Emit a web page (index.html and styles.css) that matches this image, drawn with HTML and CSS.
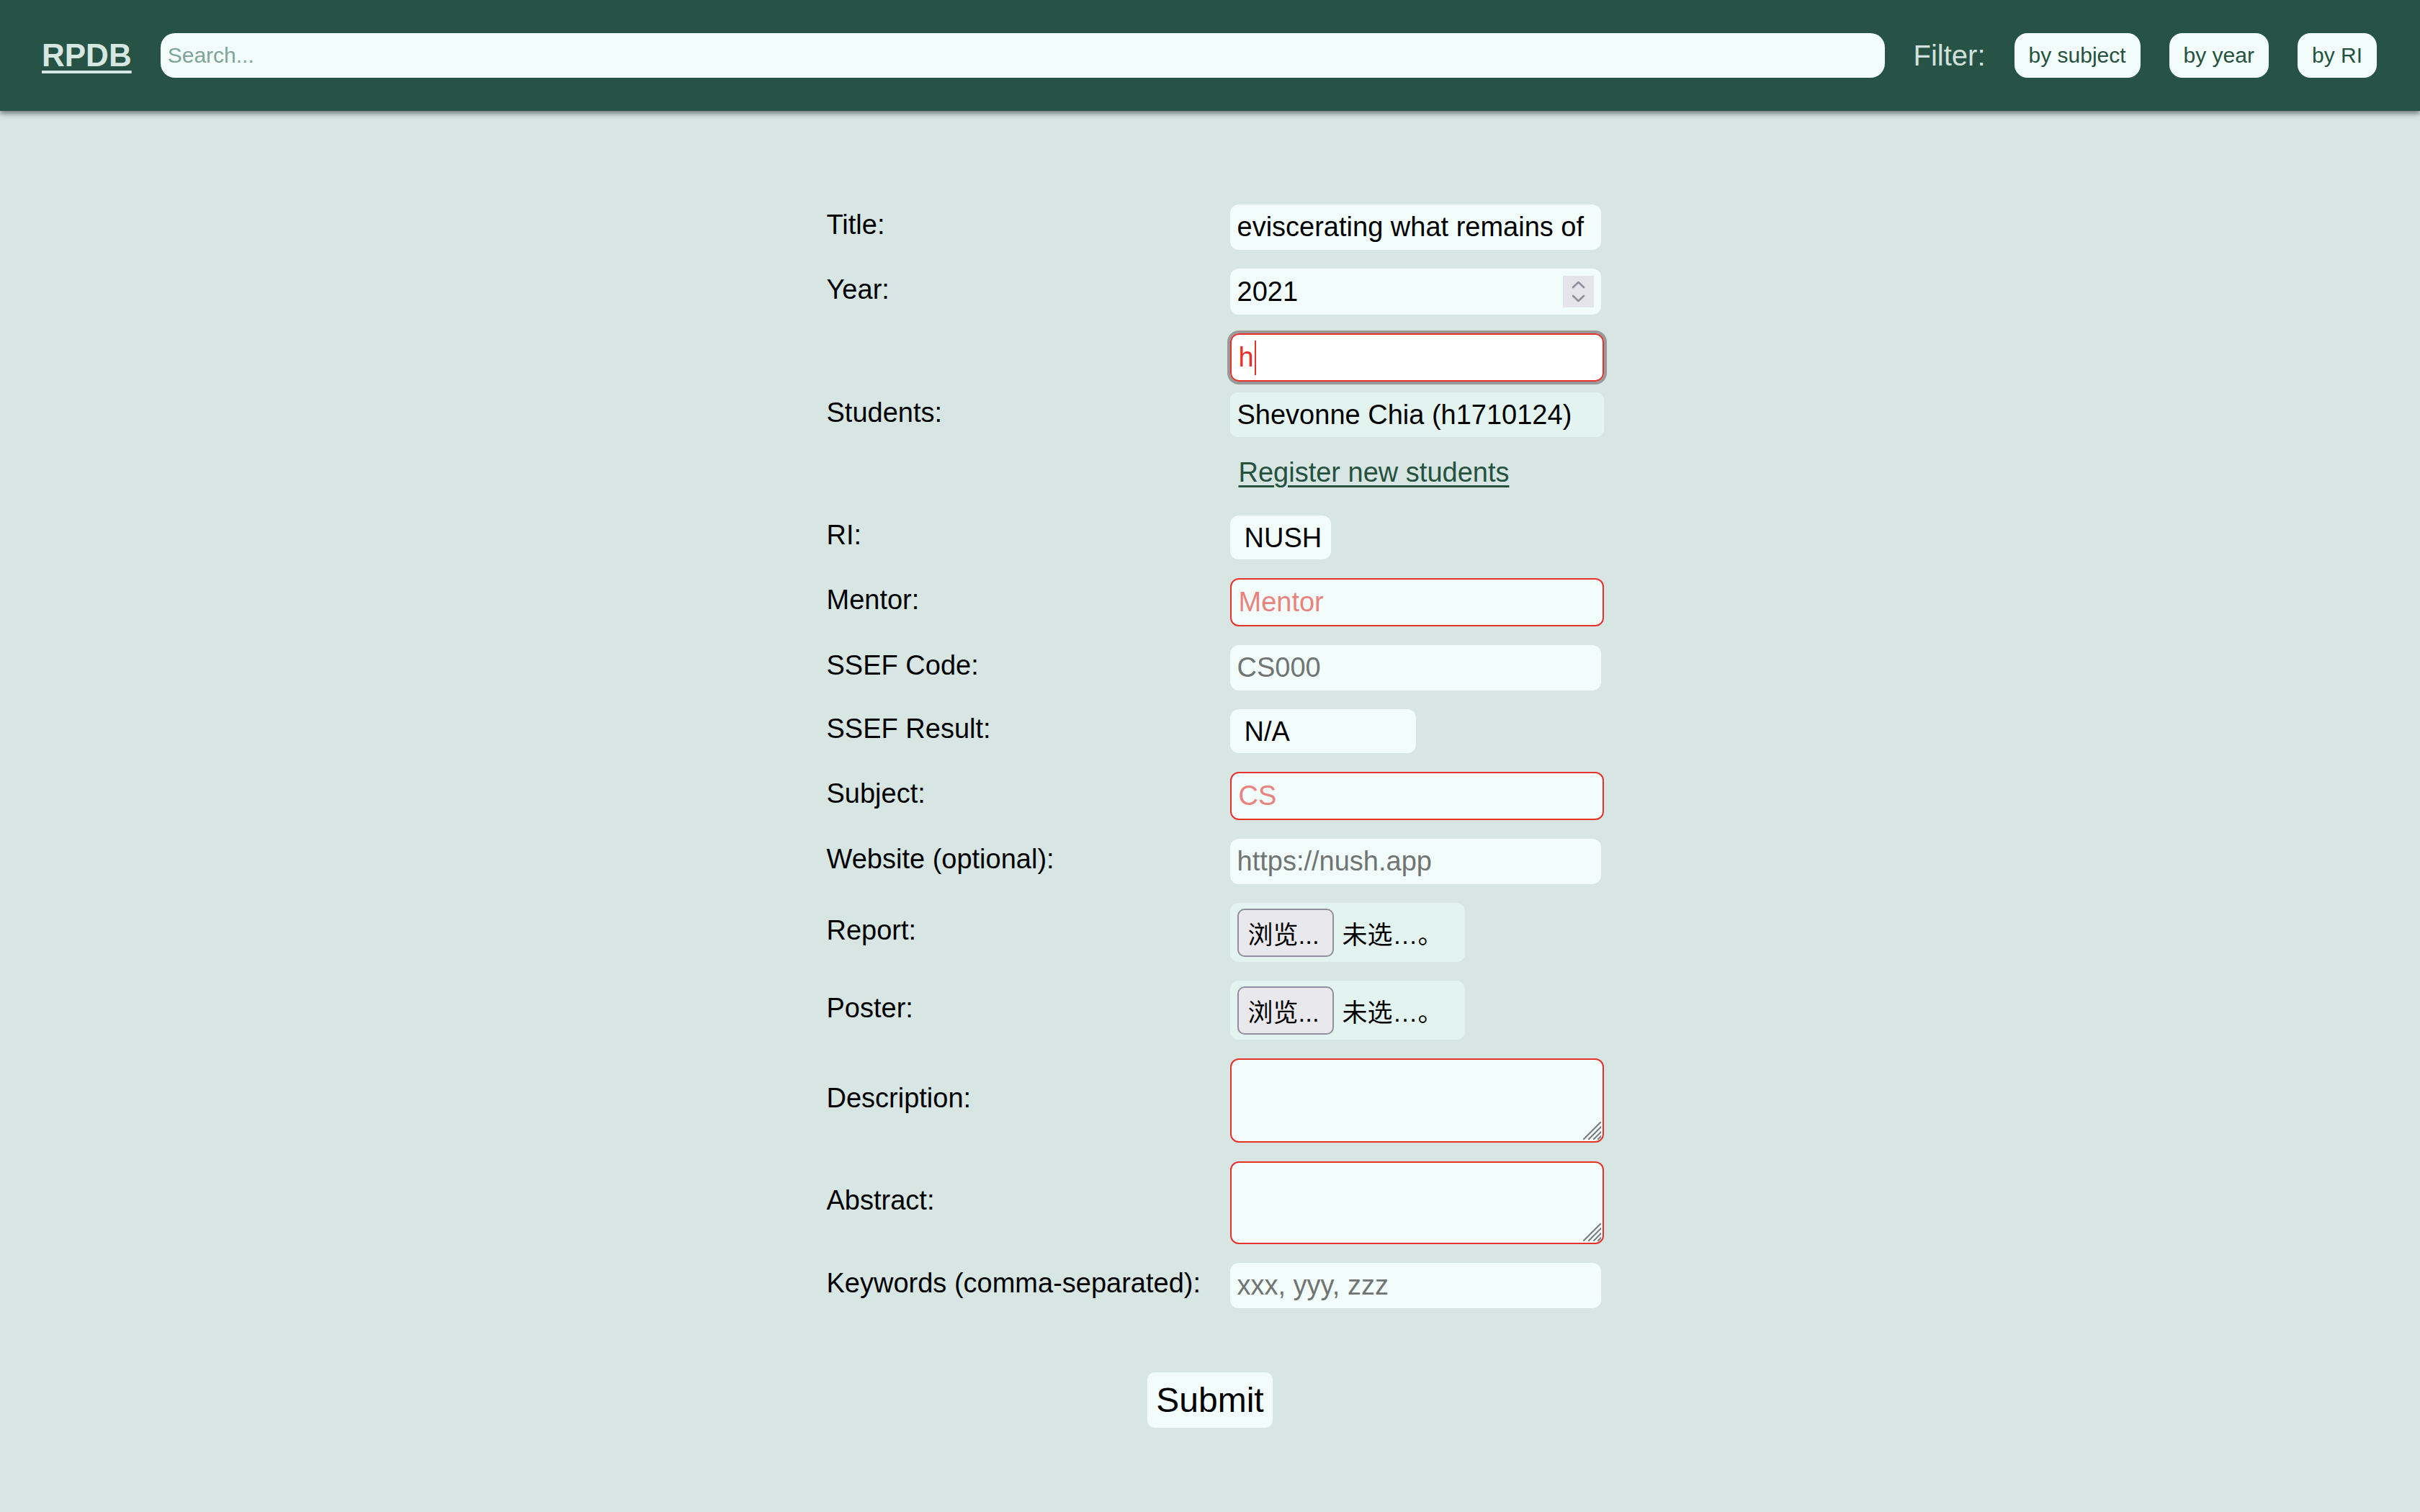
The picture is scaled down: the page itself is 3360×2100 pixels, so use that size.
FILE: index.html
```html
<!DOCTYPE html>
<html lang="en">
<head>
<meta charset="utf-8">
<title>RPDB - New Project</title>
<link rel="stylesheet" href="styles.css">
</head>
<body>
<header class="topbar">
  <a class="brand" href="#">RPDB</a>
  <input class="search" type="text" placeholder="Search...">
  <span class="filter-label">Filter:</span>
  <button class="pill" type="button">by subject</button>
  <button class="pill" type="button">by year</button>
  <button class="pill" type="button">by RI</button>
</header>

<main class="page">
  <form class="project-form">
    <div class="grid">
      <label class="lbl">Title:</label>
      <div class="cell"><input class="inp" type="text" value="eviscerating what remains of"></div>

      <label class="lbl">Year:</label>
      <div class="cell">
        <div class="inp number">
          <span class="num-val">2021</span>
          <span class="spin">
            <svg width="43" height="44" viewBox="0 0 43 44"><path d="M14 16 L21.5 9 L29 16" fill="none" stroke="#8f8f9d" stroke-width="2.6" stroke-linecap="round" stroke-linejoin="round"/><path d="M14 28 L21.5 35 L29 28" fill="none" stroke="#8f8f9d" stroke-width="2.6" stroke-linecap="round" stroke-linejoin="round"/></svg>
          </span>
        </div>
      </div>

      <label class="lbl">Students:</label>
      <div class="cell students">
        <div class="inp invalid focused"><span class="typed">h</span><span class="caret"></span></div>
        <div class="student-list">Shevonne Chia (h1710124)</div>
        <div class="reg-line"><a class="reg-link" href="#">Register new students</a></div>
      </div>

      <label class="lbl">RI:</label>
      <div class="cell"><select class="sel sel-ri"><option>NUSH</option></select></div>

      <label class="lbl">Mentor:</label>
      <div class="cell"><input class="inp invalid" type="text" placeholder="Mentor"></div>

      <label class="lbl">SSEF Code:</label>
      <div class="cell"><input class="inp" type="text" placeholder="CS000"></div>

      <label class="lbl">SSEF Result:</label>
      <div class="cell"><select class="sel sel-result"><option>N/A</option></select></div>

      <label class="lbl">Subject:</label>
      <div class="cell"><input class="inp invalid" type="text" placeholder="CS"></div>

      <label class="lbl">Website (optional):</label>
      <div class="cell"><input class="inp" type="text" placeholder="https://nush.app"></div>

      <label class="lbl">Report:</label>
      <div class="cell">
        <div class="file"><span class="file-btn">浏览...</span><span class="file-name">未选…。</span></div>
      </div>

      <label class="lbl">Poster:</label>
      <div class="cell">
        <div class="file"><span class="file-btn">浏览...</span><span class="file-name">未选…。</span></div>
      </div>

      <label class="lbl">Description:</label>
      <div class="cell">
        <div class="ta-wrap">
          <textarea class="ta"></textarea>
          <svg class="grip" width="25" height="25" viewBox="0 0 25 25"><g stroke="#7d7d7d" stroke-width="2.2" stroke-linecap="round"><line x1="1" y1="24" x2="25" y2="0"/><line x1="8" y1="24" x2="25" y2="7"/><line x1="15" y1="24" x2="25" y2="14"/><line x1="21" y1="24" x2="25" y2="20"/></g></svg>
        </div>
      </div>

      <label class="lbl">Abstract:</label>
      <div class="cell">
        <div class="ta-wrap ta-abs">
          <textarea class="ta"></textarea>
          <svg class="grip" width="25" height="25" viewBox="0 0 25 25"><g stroke="#7d7d7d" stroke-width="2.2" stroke-linecap="round"><line x1="1" y1="24" x2="25" y2="0"/><line x1="8" y1="24" x2="25" y2="7"/><line x1="15" y1="24" x2="25" y2="14"/><line x1="21" y1="24" x2="25" y2="20"/></g></svg>
        </div>
      </div>

      <label class="lbl">Keywords (comma-separated):</label>
      <div class="cell"><input class="inp" type="text" placeholder="xxx, yyy, zzz"></div>
    </div>

    <div class="actions"><button class="submit" type="button">Submit</button></div>
  </form>
</main>
</body>
</html>
```

FILE: styles.css
```css
* {
  box-sizing: border-box;
}

html, body {
  margin: 0;
  padding: 0;
}

body {
  background: #d7e6e3;
  font-family: "Liberation Sans", Arial, sans-serif;
  color: #000;
  min-height: 2100px;
}

/* ---------- top bar ---------- */
.topbar {
  height: 154px;
  background: #265345;
  display: flex;
  align-items: center;
  gap: 40px;
  padding: 0 60px 0 58px;
  box-shadow: 0 3px 8px rgba(0, 0, 0, 0.55);
  position: relative;
  z-index: 2;
}

.brand {
  color: #d6e6e1;
  font-size: 44px;
  font-weight: bold;
  text-decoration: underline;
  text-decoration-thickness: 4px;
  text-underline-offset: 6px;
}

.search {
  flex: 1;
  height: 62px;
  border: none;
  border-radius: 20px;
  background: #f2fdfb;
  padding: 0 10px;
  font-family: "Liberation Sans", Arial, sans-serif;
  font-size: 30px;
  outline: none;
}

.search::placeholder {
  color: #7fa497;
}

.filter-label {
  color: #d0e1db;
  font-size: 40px;
}

.pill {
  height: 62px;
  border: none;
  border-radius: 18px;
  background: #f2fdfb;
  color: #25523f;
  padding: 0 20px;
  font-family: "Liberation Sans", Arial, sans-serif;
  font-size: 30px;
}

/* ---------- form ---------- */
.page {
  padding-top: 130px;
}

.project-form {
  width: 1093px;
  margin: 0 auto;
  padding-left: 14px;
}

.grid {
  display: grid;
  grid-template-columns: 560px 519px;
  row-gap: 26px;
  align-items: center;
}

.lbl {
  font-size: 38px;
  padding-bottom: 6px;
  white-space: nowrap;
}

.cell {
  display: flex;
  flex-direction: column;
  align-items: flex-start;
}

.inp {
  width: 515px;
  height: 63px;
  border: none;
  border-radius: 12px;
  background: #f2fdfb;
  padding: 0 10px;
  font-family: "Liberation Sans", Arial, sans-serif;
  font-size: 38px;
  color: #000;
  outline: none;
}

.inp::placeholder {
  color: #707473;
  opacity: 1;
}

.inp.invalid {
  width: 519px;
  height: 67px;
  border: 2px solid #e5322b;
  color: #e5322b;
}

.inp.invalid::placeholder {
  color: #ea837d;
}

.number {
  display: flex;
  align-items: center;
  justify-content: space-between;
  height: 64px;
}

.spin {
  width: 43px;
  height: 44px;
  background: #e4e4ea;
  display: flex;
}

.focused {
  display: flex;
  align-items: center;
  background: #ffffff;
  outline: 4px solid #999999;
}

.typed {
  color: #e5322b;
}

.caret {
  width: 2px;
  height: 48px;
  background: #e5322b;
  margin-left: 1px;
}

.students {
  gap: 15px;
}

.student-list {
  width: 519px;
  height: 62px;
  background: #e3f3f0;
  border-radius: 10px;
  padding: 0 10px;
  font-size: 38px;
  display: flex;
  align-items: center;
}

.reg-line {
  height: 68px;
  line-height: 68px;
  padding-left: 12px;
}

.reg-link {
  color: #25523f;
  font-size: 38px;
  text-decoration: underline;
  text-decoration-thickness: 3px;
  text-underline-offset: 5px;
}

.sel {
  appearance: none;
  -webkit-appearance: none;
  height: 61px;
  border: none;
  border-radius: 12px;
  background: #f2fdfb;
  padding: 0 4px 0 20px;
  font-family: "Liberation Sans", Arial, sans-serif;
  font-size: 38px;
  color: #000;
}

.sel-ri {
  width: 140px;
}

.sel-result {
  width: 258px;
}

.file {
  width: 326px;
  height: 82px;
  background: #e3f3f0;
  border-radius: 12px;
  padding: 0 10px;
  display: flex;
  align-items: center;
  gap: 12px;
  font-family: "Liberation Sans", "Noto Sans CJK SC", sans-serif;
  font-size: 35px;
}

.file-btn {
  width: 134px;
  height: 67px;
  border: 2px solid #8f8f9d;
  border-radius: 10px;
  background: #e9e9ed;
  padding-left: 13px;
  display: flex;
  align-items: center;
  white-space: nowrap;
}

.file-name {
  white-space: nowrap;
}

.ta-wrap {
  position: relative;
  width: 519px;
  height: 117px;
}

.ta-abs {
  height: 115px;
}

.ta {
  display: block;
  width: 100%;
  height: 100%;
  resize: none;
  border: 2px solid #e5322b;
  border-radius: 12px;
  background: #f2fdfb;
  outline: none;
  font-family: "Liberation Sans", Arial, sans-serif;
  font-size: 38px;
}

.grip {
  position: absolute;
  right: 4px;
  bottom: 4px;
}

.actions {
  display: flex;
  justify-content: center;
  padding-top: 89px;
  padding-right: 14px;
}

.submit {
  height: 77px;
  border: none;
  border-radius: 10px;
  background: #f2fdfb;
  padding: 0 12px;
  font-family: "Liberation Sans", Arial, sans-serif;
  font-size: 48px;
  color: #000;
}
```
